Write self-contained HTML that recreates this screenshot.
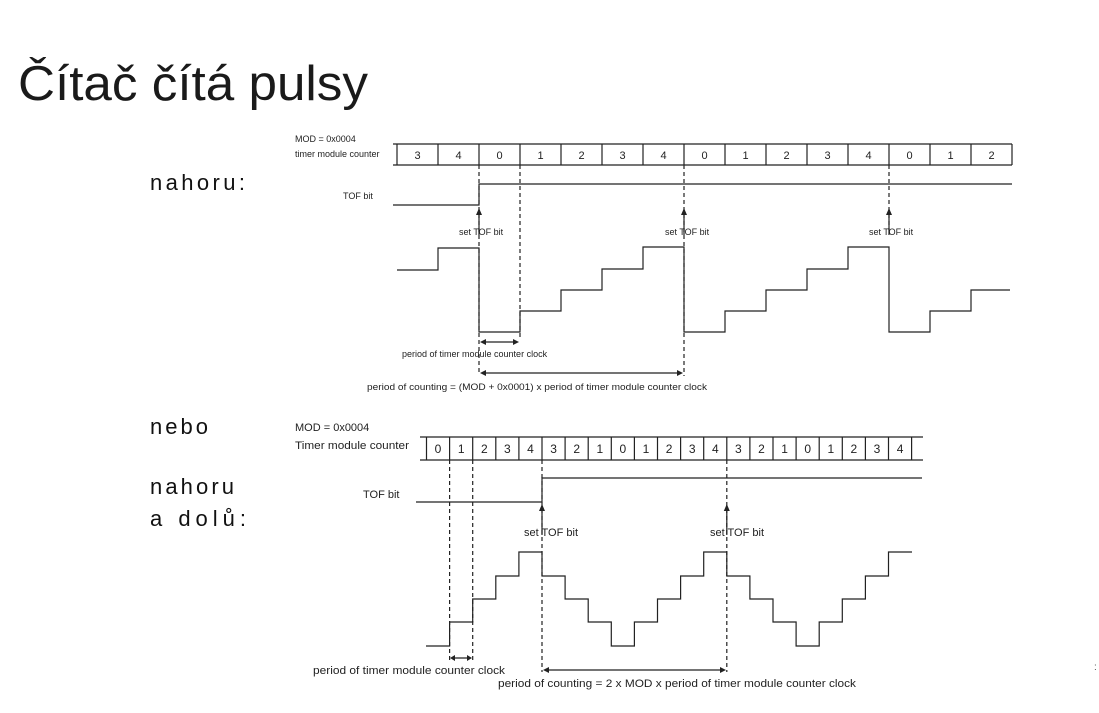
<!DOCTYPE html>
<html><head><meta charset="utf-8"><style>
html,body{margin:0;padding:0;background:#fff;width:1099px;height:713px;overflow:hidden}
</style></head><body>
<svg width="1099" height="713" viewBox="0 0 1099 713" xmlns="http://www.w3.org/2000/svg" font-family="Liberation Sans, sans-serif">
<text x="18" y="100" font-size="49" fill="#1a1a1a" textLength="350" lengthAdjust="spacingAndGlyphs">Čítač čítá pulsy</text>
<g font-size="22" fill="#111">
<text x="150" y="190" textLength="95" lengthAdjust="spacing">nahoru:</text>
<text x="150" y="434" textLength="58" lengthAdjust="spacing">nebo</text>
<text x="150" y="494" textLength="84" lengthAdjust="spacing">nahoru</text>
<text x="150" y="526" textLength="96" lengthAdjust="spacing">a dolů:</text>
</g>
<text x="1094" y="670" font-size="10" fill="#555">:</text>

<!-- TOP DIAGRAM -->
<g fill="#222" font-size="9">
<text x="295" y="142">MOD = 0x0004</text>
<text x="295" y="157">timer module counter</text>
<text x="343" y="199">TOF bit</text>
<text x="459" y="235">set TOF bit</text>
<text x="665" y="235">set TOF bit</text>
<text x="869" y="235">set TOF bit</text>
<text x="402" y="357">period of timer module counter clock</text>
<text x="367" y="390" textLength="340" lengthAdjust="spacingAndGlyphs">period of counting = (MOD + 0x0001) x period of timer module counter clock</text>
</g>
<g stroke="#222" stroke-width="1.2" fill="none">
<path d="M393 144H1012M393 165H1012"/>
<path d="M397 144V165M438 144V165M479 144V165M520 144V165M561 144V165M602 144V165M643 144V165M684 144V165M725 144V165M766 144V165M807 144V165M848 144V165M889 144V165M930 144V165M971 144V165M1012 144V165"/>
<path d="M393 205H479V184H1012"/>
<path d="M397 270H438V248H479V332H520V311H561V290H602V269H643V247H684V332H725V311H766V290H807V269H848V247H889V332H930V311H971V290H1010"/>
<path d="M479 165V372M520 165V340M684 165V376M889 165V230" stroke-dasharray="4 3"/>
<path d="M479 235V213M684 235V213M889 235V213"/>
<path d="M484 342H515M484 373H679"/>
</g>
<g fill="#222">
<path d="M479 208l-3 7h6z M684 208l-3 7h6z M889 208l-3 7h6z"/>
<path d="M480 342l6-3v6z M519 342l-6-3v6z M480 373l6-3v6z M683 373l-6-3v6z"/>
</g>
<g fill="#222" font-size="11" text-anchor="middle">
<text x="417.5" y="159">3</text><text x="458.5" y="159">4</text><text x="499.5" y="159">0</text><text x="540.5" y="159">1</text><text x="581.5" y="159">2</text><text x="622.5" y="159">3</text><text x="663.5" y="159">4</text><text x="704.5" y="159">0</text><text x="745.5" y="159">1</text><text x="786.5" y="159">2</text><text x="827.5" y="159">3</text><text x="868.5" y="159">4</text><text x="909.5" y="159">0</text><text x="950.5" y="159">1</text><text x="991.5" y="159">2</text>
</g>

<!-- BOTTOM DIAGRAM -->
<g fill="#222" font-size="11">
<text x="295" y="431">MOD = 0x0004</text>
<text x="295" y="449" textLength="114" lengthAdjust="spacingAndGlyphs">Timer module counter</text>
<text x="363" y="498">TOF bit</text>
<text x="524" y="536">set TOF bit</text>
<text x="710" y="536">set TOF bit</text>
<text x="313" y="674" textLength="192" lengthAdjust="spacingAndGlyphs">period of timer module counter clock</text>
<text x="498" y="687" textLength="358" lengthAdjust="spacingAndGlyphs">period of counting = 2 x MOD x period of timer module counter clock</text>
</g>
<g stroke="#222" stroke-width="1.2" fill="none">
<path d="M420 437H923M420 460H923"/>
<path d="M426.5 437V460M449.6 437V460M472.7 437V460M495.8 437V460M518.9 437V460M542 437V460M565.1 437V460M588.2 437V460M611.3 437V460M634.4 437V460M657.5 437V460M680.6 437V460M703.7 437V460M726.8 437V460M749.9 437V460M773 437V460M796.1 437V460M819.2 437V460M842.3 437V460M865.4 437V460M888.5 437V460M911.6 437V460"/>
<path d="M416 502H542V478H922"/>
<path d="M426 646H449.6V622H472.7V599H495.8V576H518.9V552H542V576H565.1V599H588.2V622H611.3V646H634.4V622H657.5V599H680.6V576H703.7V552H726.8V576H749.9V599H773V622H796.1V646H819.2V622H842.3V599H865.4V576H888.5V552H912"/>
<path d="M449.6 460V660M472.7 460V660M542 460V672M726.8 460V672" stroke-dasharray="4 3"/>
<path d="M542 535V510M726.8 535V510"/>
<path d="M452 658H470M547 670H722"/>
</g>
<g fill="#222">
<path d="M542 504l-3 7h6z M726.8 504l-3 7h6z"/>
<path d="M450 658l5-3v6z M472 658l-5-3v6z M543 670l6-3v6z M726 670l-6-3v6z"/>
</g>
<g fill="#222" font-size="12" text-anchor="middle">
<text x="438" y="453">0</text><text x="461.2" y="453">1</text><text x="484.3" y="453">2</text><text x="507.4" y="453">3</text><text x="530.5" y="453">4</text><text x="553.6" y="453">3</text><text x="576.7" y="453">2</text><text x="599.8" y="453">1</text><text x="622.9" y="453">0</text><text x="646" y="453">1</text><text x="669.1" y="453">2</text><text x="692.2" y="453">3</text><text x="715.3" y="453">4</text><text x="738.4" y="453">3</text><text x="761.5" y="453">2</text><text x="784.6" y="453">1</text><text x="807.7" y="453">0</text><text x="830.8" y="453">1</text><text x="853.9" y="453">2</text><text x="877" y="453">3</text><text x="900.1" y="453">4</text>
</g>
</svg>
</body></html>
